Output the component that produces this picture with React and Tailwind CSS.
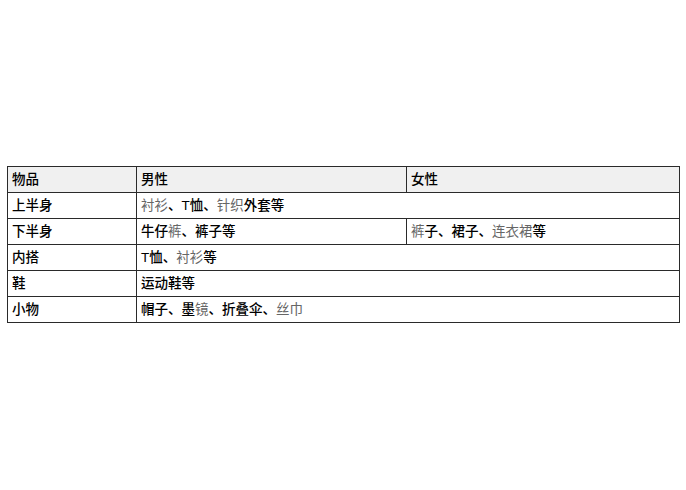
const rows = [
  {
    item: "上半身",
    span: true,
    men: [["衬衫", true], ["、T恤、", false], ["针织", true], ["外套等", false]],
  },
  {
    item: "下半身",
    men: [["牛仔", false], ["裤", true], ["、裤子等", false]],
    women: [["裤", true], ["子、裙子、", false], ["连衣裙", true], ["等", false]],
  },
  {
    item: "内搭",
    span: true,
    men: [["T恤、", false], ["衬衫", true], ["等", false]],
  },
  { item: "鞋", span: true, men: [["运动鞋等", false]] },
  {
    item: "小物",
    span: true,
    men: [["帽子、墨", false], ["镜", true], ["、折叠伞、", false], ["丝巾", true]],
  },
];

const Text = ({ parts }) =>
  parts.map(([t, light], i) => (
    <span key={i} className={light ? "text-[#666] font-normal" : ""}>
      {t}
    </span>
  ));

const cell = "border border-[#2a2a2a] h-[26px] px-[4px] py-0 align-middle";

export default function App() {
  return (
    <div
      className="w-[686px] h-[490px] bg-white pt-[166px] pl-[7px]"
      style={{ fontFamily: '"Liberation Sans", "Noto Sans CJK JP", sans-serif' }}
    >
      <table className="border-collapse text-[13.5px] leading-[18px] text-black font-medium">
        <colgroup>
          <col className="w-[129px]" />
          <col className="w-[270px]" />
          <col className="w-[273px]" />
        </colgroup>
        <thead>
          <tr className="bg-[#f0f0f0]">
            <th className={`${cell} text-left font-medium`}>物品</th>
            <th className={`${cell} text-left font-medium`}>男性</th>
            <th className={`${cell} text-left font-medium`}>女性</th>
          </tr>
        </thead>
        <tbody>
          {rows.map((r) => (
            <tr key={r.item}>
              <td className={cell}>{r.item}</td>
              {r.span ? (
                <td className={cell} colSpan={2}>
                  <Text parts={r.men} />
                </td>
              ) : (
                <>
                  <td className={cell}>
                    <Text parts={r.men} />
                  </td>
                  <td className={cell}>
                    <Text parts={r.women} />
                  </td>
                </>
              )}
            </tr>
          ))}
        </tbody>
      </table>
    </div>
  );
}
